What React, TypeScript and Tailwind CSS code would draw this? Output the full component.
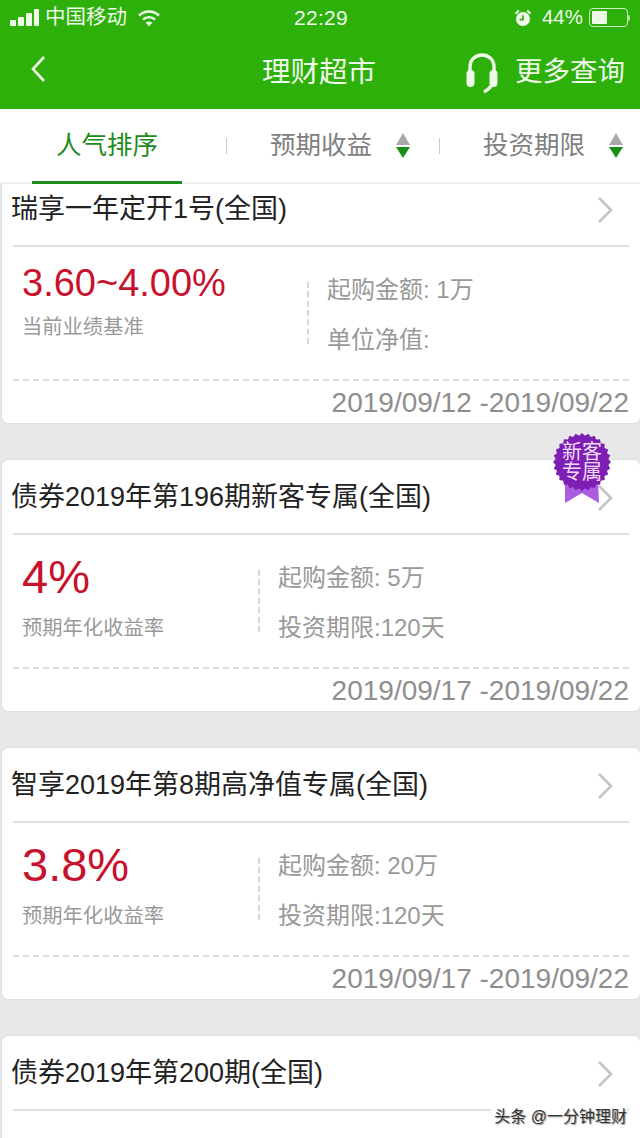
const FONT = "[font-family:'Liberation_Sans','Noto_Sans_CJK_SC',sans-serif]";

interface Product {
  title: string;
  rate: string;
  rateLabel: string;
  amount: string;
  lastLabel: string;
  dates: string;
  wide?: boolean;
  badge?: boolean;
}

const products: Product[] = [
  {
    title: "瑞享一年定开1号(全国)",
    rate: "3.60~4.00%",
    rateLabel: "当前业绩基准",
    amount: "起购金额: 1万",
    lastLabel: "单位净值:",
    dates: "2019/09/12 -2019/09/22",
    wide: true,
  },
  {
    title: "债券2019年第196期新客专属(全国)",
    rate: "4%",
    rateLabel: "预期年化收益率",
    amount: "起购金额: 5万",
    lastLabel: "投资期限:120天",
    dates: "2019/09/17 -2019/09/22",
    badge: true,
  },
  {
    title: "智享2019年第8期高净值专属(全国)",
    rate: "3.8%",
    rateLabel: "预期年化收益率",
    amount: "起购金额: 20万",
    lastLabel: "投资期限:120天",
    dates: "2019/09/17 -2019/09/22",
  },
  {
    // cut off by the bottom of the screen
    title: "债券2019年第200期(全国)",
    rate: "",
    rateLabel: "",
    amount: "",
    lastLabel: "",
    dates: "",
  },
];

function StatusBar() {
  return (
    <div className="relative flex h-[35px] items-center justify-between pl-[10px] pr-[10px] text-[#eef9ea]">
      <div className="flex items-center">
        <div className="flex items-end gap-[2px]">
          <span className="h-[6px] w-[6px] rounded-[1px] bg-[#eef9ea]" />
          <span className="h-[9px] w-[6px] rounded-[1px] bg-[#eef9ea]" />
          <span className="h-[13px] w-[6px] rounded-[1px] bg-[#eef9ea]" />
          <span className="h-[17px] w-[5px] rounded-[1px] bg-[#eef9ea]" />
        </div>
        <span className="ml-[6px] text-[20.5px] leading-none">中国移动</span>
        <svg className="ml-[10px]" width="24" height="18" viewBox="0 0 24 18" fill="none" stroke="#eef9ea" strokeWidth="2.6">
          <path d="M2 6.5C8 1.2 16 1.2 22 6.5" />
          <path d="M6 10.5C9.6 7.4 14.4 7.4 18 10.5" />
          <path d="M12 17.5L8.6 13.6C10.6 12.2 13.4 12.2 15.4 13.6Z" fill="#eef9ea" stroke="none" />
        </svg>
      </div>
      <span className="absolute left-[294px] top-[6px] text-[21px] leading-[24px] tracking-[0.3px]">22:29</span>
      <div className="flex items-center">
        <svg width="18" height="18" viewBox="0 0 16 17">
          <circle cx="8" cy="9.5" r="6.6" fill="#eef9ea" />
          <path d="M1 4.5L4 1.5M15 4.5L12 1.5" stroke="#eef9ea" strokeWidth="2" />
          <path d="M8 6V10H4.8" fill="none" stroke="#2db00a" strokeWidth="1.6" />
        </svg>
        <span className="ml-[10px] text-[20.5px] leading-none">44%</span>
        <div className="ml-[6px] flex h-[19px] w-[39px] items-center rounded-[4px] border border-[#cdeec4] p-[2px]">
          <span className="h-full w-[15px] rounded-[1px] bg-[#eef9ea]" />
        </div>
        <span className="h-[6px] w-[2px] rounded-r-sm bg-[#a6df96]" />
      </div>
    </div>
  );
}

function NavBar() {
  return (
    <div className="relative flex h-[74px] items-center justify-between pl-[29px] pr-[15px] text-[#eef9ea]">
      <svg width="22" height="30" viewBox="0 0 22 30" fill="none" stroke="#eef9ea" strokeWidth="2.6" className="-mt-[6px]">
        <path d="M15 3L4 15L15 27" />
      </svg>
      <span className="absolute left-[262px] top-[18px] text-[28.5px] leading-[38px]">理财超市</span>
      <div className="flex items-center">
        <svg width="32" height="42" viewBox="0 0 32 42" fill="none" className="mt-[1px]">
          <path d="M4 21V15C4 -1 28 -1 28 15V24C28 32 25 36 18 40" stroke="#eef9ea" strokeWidth="3.4" />
          <rect x="0.5" y="18" width="8" height="17" rx="4" fill="#eef9ea" />
          <rect x="23.5" y="18" width="8" height="17" rx="4" fill="#eef9ea" />
        </svg>
        <span className="ml-[17px] text-[27.5px] leading-[36px]">更多查询</span>
      </div>
    </div>
  );
}

function SortArrows() {
  return (
    <svg width="16" height="27" viewBox="0 0 16 27" className="shrink-0">
      <path d="M8 1L15 13H1Z" fill="#a9a9a9" />
      <path d="M8 26L15 15H1Z" fill="#1b8f16" />
    </svg>
  );
}

function TabBar() {
  return (
    <div className="relative z-10 flex h-[75px] shrink-0 border-b-2 border-[#eeeeee] bg-white text-[25.5px]">
      <div className="relative flex w-[226px] items-center pl-[56px] text-[#1f8a1c]">
        人气排序
        <span className="absolute bottom-[-2px] left-[32px] h-[3px] w-[150px] bg-[#1d8b1a]" />
      </div>
      <div className="flex w-[213px] items-center text-[#808080]">
        <span className="h-[16px] w-px bg-[#cccccc]" />
        <span className="ml-[43px]">预期收益</span>
        <span className="ml-[23px]">
          <SortArrows />
        </span>
      </div>
      <div className="flex flex-1 items-center text-[#808080]">
        <span className="h-[16px] w-px bg-[#cccccc]" />
        <span className="ml-[43px]">投资期限</span>
        <span className="ml-[23px]">
          <SortArrows />
        </span>
      </div>
    </div>
  );
}

// scalloped rosette, points worked out once
const rosette = Array.from({ length: 56 }, (_, i) => {
  const r = i % 2 === 0 ? 29 : 26.5;
  const a = (i / 56) * Math.PI * 2;
  return `${30 + r * Math.cos(a)},${30 + r * Math.sin(a)}`;
}).join(" ");

function Badge() {
  return (
    <div className="absolute right-[28px] top-[-28px] h-[72px] w-[60px]">
      <svg width="60" height="72" viewBox="0 0 60 72" className="absolute inset-0">
        <path d="M13 48H46L47 71L30 61L13 71Z" fill="#a95ee2" />
        <polygon points={rosette} fill="#7d1fb5" />
      </svg>
      <div className="absolute left-0 top-[10px] w-full text-center text-[20px] leading-[20px] text-[#f3dcf8]">
        <div>新客</div>
        <div>专属</div>
      </div>
    </div>
  );
}

function ProductCard({ p }: { p: Product }) {
  return (
    <div className="relative shrink-0 rounded-[6px] bg-white shadow-[0_0_2px_rgba(0,0,0,0.12)]">
      {p.badge && <Badge />}
      <div className="mx-[11px] flex h-[75px] items-center justify-between border-b-2 border-[#dedede] pr-[15px] pt-[2px]">
        <span className="-ml-[2px] text-[27px] text-[#222222]">{p.title}</span>
        <svg width="18" height="28" viewBox="0 0 18 28" fill="none" stroke="#c4c4c4" strokeWidth="2.6">
          <path d="M3 2L15 14L3 26" />
        </svg>
      </div>
      <div className="mx-[11px] flex h-[134px] border-b-2 border-dashed border-[#dddddd]">
        <div className={`flex shrink-0 flex-col pl-[9px] ${p.wide ? "w-[294px]" : "w-[245px]"}`}>
          <span className={`text-[#c8122d] ${p.wide ? "mt-[14px] text-[38px] leading-[44px]" : "mt-[16px] text-[47px] leading-[52px]"}`}>
            {p.rate}
          </span>
          <span className={`text-[20.3px] leading-[28px] text-[#999999] ${p.wide ? "mt-[8px]" : "mt-[11px]"}`}>
            {p.rateLabel}
          </span>
        </div>
        {p.rate && (
          <div className="flex flex-1">
            <div className="mt-[35px] h-[62px] border-l-2 border-dashed border-[#d8d8d8]" />
            <div className="ml-[18px] flex flex-col pt-[26px] text-[24px] leading-[34px] text-[#999999]">
              <span>{p.amount}</span>
              <span className="mt-[16px]">{p.lastLabel}</span>
            </div>
          </div>
        )}
      </div>
      <div className="flex h-[42px] items-center justify-end pr-[11px] pt-[1px] text-[28px] text-[#8e8e8e]">{p.dates}</div>
    </div>
  );
}

export default function App() {
  return (
    <div className={`relative flex h-[1138px] w-[640px] flex-col overflow-hidden bg-[#e8e8e8] ${FONT}`}>
      <div className="shrink-0 bg-[#2db00a]">
        <StatusBar />
        <NavBar />
      </div>
      <TabBar />
      <div className="-mt-[12px] flex shrink-0 flex-col gap-[37px] pl-[2px]">
        {products.map((p) => (
          <ProductCard key={p.title} p={p} />
        ))}
      </div>
      <div className="absolute bottom-[10px] right-[13px] bg-white pl-[3px] text-[16px] leading-[22px] text-[#333333] [text-shadow:1px_1px_1px_#999999]">
        头条 @一分钟理财
      </div>
    </div>
  );
}
